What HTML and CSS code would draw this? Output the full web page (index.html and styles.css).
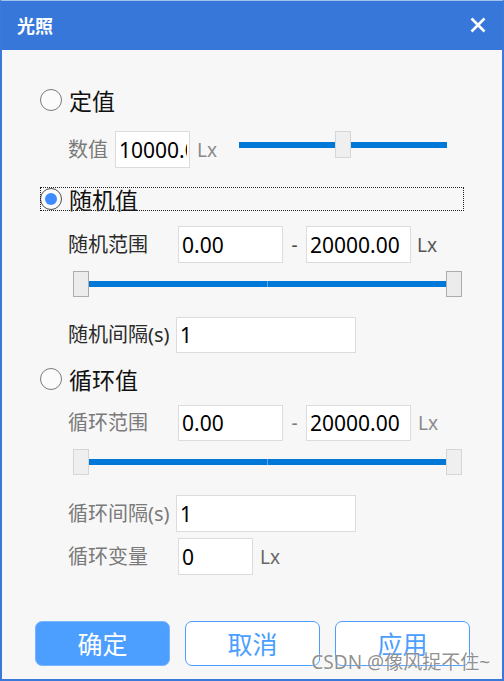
FILE: index.html
```html
<!DOCTYPE html>
<html lang="zh">
<head>
<meta charset="utf-8">
<title>光照</title>
<link rel="stylesheet" href="styles.css">
</head>
<body>
<div class="window">
  <div class="titlebar">
    <span class="title">光照</span>
    <svg class="close" width="16" height="16" viewBox="0 0 16 16"><path d="M1.5 1.5 L14.5 14.5 M14.5 1.5 L1.5 14.5" stroke="#fff" stroke-width="2.6" fill="none"/></svg>
  </div>
  <div class="content">
    <div class="radio-row row-a"><span class="radio"></span><span class="radio-label">定值</span></div>

    <div class="field-row row-b">
      <span class="label muted lw47">数值</span>
      <input class="input w75" type="text" value="10000.00" readonly>
      <span class="unit">Lx</span>
      <div class="slider single">
        <div class="track w96"></div>
        <div class="thumb disabled tall"></div>
        <div class="track w96"></div>
      </div>
    </div>

    <div class="radio-row row-c focused"><span class="radio checked"></span><span class="radio-label">随机值</span></div>

    <div class="field-row row-d">
      <span class="label lw110">随机范围</span>
      <input class="input w105" type="text" value="0.00" readonly>
      <span class="dash">-</span>
      <input class="input w105" type="text" value="20000.00" readonly>
      <span class="unit u-dark">Lx</span>
    </div>

    <div class="range row-e">
      <div class="thumb"></div>
      <div class="track split"></div>
      <div class="thumb"></div>
    </div>

    <div class="field-row row-f">
      <span class="label lw108">随机间隔(s)</span>
      <input class="input w180" type="text" value="1" readonly>
    </div>

    <div class="radio-row row-g"><span class="radio"></span><span class="radio-label">循环值</span></div>

    <div class="field-row row-h">
      <span class="label muted lw110">循环范围</span>
      <input class="input w105" type="text" value="0.00" readonly>
      <span class="dash muted">-</span>
      <input class="input w105" type="text" value="20000.00" readonly>
      <span class="unit">Lx</span>
    </div>

    <div class="range row-i">
      <div class="thumb disabled"></div>
      <div class="track split"></div>
      <div class="thumb disabled"></div>
    </div>

    <div class="field-row row-j">
      <span class="label muted lw108">循环间隔(s)</span>
      <input class="input w180" type="text" value="1" readonly>
    </div>

    <div class="field-row row-k">
      <span class="label muted lw110">循环变量</span>
      <input class="input w75" type="text" value="0" readonly>
      <span class="unit u-mid">Lx</span>
    </div>

    <div class="buttons">
      <button class="btn primary">确定</button>
      <button class="btn">取消</button>
      <button class="btn">应用</button>
    </div>
  </div>
  <div class="watermark">CSDN @像风捉不住~</div>
</div>
</body>
</html>
```

FILE: styles.css
```css
html, body {
  margin: 0;
  padding: 0;
  background: #ffffff;
}

.window {
  position: relative;
  width: 504px;
  height: 681px;
  box-sizing: border-box;
  border: 2px solid #3a79d9;
  border-top: 1px solid #a3c1ef;
  background: #f7f7f7;
  font-family: "Noto Sans", "Noto Sans CJK SC", sans-serif;
  overflow: hidden;
}

.titlebar {
  height: 49px;
  background: #3677d9;
  display: flex;
  align-items: center;
  justify-content: space-between;
  padding: 0 16px 0 15px;
}

.title {
  color: #ffffff;
  font-family: "Noto Sans CJK SC", sans-serif;
  font-weight: 700;
  font-size: 18px;
  line-height: 20px;
  margin-top: -1px;
}

.close {
  display: block;
  margin-top: -2px;
}

.content {
  padding-top: 38px;
}

/* radio rows */
.radio-row {
  display: flex;
  align-items: center;
  width: 424px;
  height: 24px;
  margin-left: 38px;
  box-sizing: border-box;
}

.radio-row.focused {
  outline: 1px dotted #222;
  outline-offset: -1px;
}

.radio {
  width: 22px;
  height: 22px;
  box-sizing: border-box;
  border: 1.5px solid #7a7a7a;
  border-radius: 50%;
  display: flex;
  align-items: center;
  justify-content: center;
  flex: none;
  background: #fbfbfb;
}

.radio.checked {
  border-color: #505050;
}

.radio.checked::after {
  content: "";
  width: 12px;
  height: 12px;
  border-radius: 50%;
  background: #3f8cff;
}

.radio-label {
  margin-left: 7px;
  font-family: "Noto Sans CJK SC", sans-serif;
  font-size: 23px;
  line-height: 24px;
  color: #111;
}

/* field rows */
.field-row {
  display: flex;
  align-items: center;
  height: 37px;
  margin-left: 66px;
}

.label {
  font-family: "Noto Sans", "Noto Sans CJK SC", sans-serif;
  font-size: 20px;
  line-height: 24px;
  color: #2a2a2a;
  white-space: nowrap;
  flex: none;
}

.label.muted, .dash.muted {
  color: #7a7a7a;
}

.lw47 { width: 47px; }
.lw108 { width: 108px; }
.lw110 { width: 110px; }

.input {
  height: 37px;
  box-sizing: border-box;
  border: 1px solid #dcdcdc;
  background: #ffffff;
  padding: 0 2px 0 3px;
  margin: 0;
  font-family: "Noto Sans", sans-serif;
  font-size: 21px;
  color: #000;
  outline: none;
  flex: none;
}

.w75 { width: 75px; }
.w105 { width: 105px; }
.w180 { width: 180px; }

.row-f .input, .row-h .input { height: 36px; }

.unit {
  font-family: "Noto Sans", sans-serif;
  font-size: 19px;
  color: #8a8a8a;
  margin-left: 7px;
  line-height: 24px;
}

.unit.u-dark { color: #555; margin-left: 6px; }
.unit.u-mid { color: #666; }

.dash {
  width: 23px;
  text-align: center;
  font-size: 19px;
  color: #444;
  line-height: 24px;
}

/* sliders */
.slider.single {
  display: flex;
  align-items: center;
  align-self: flex-start;
  height: 27px;
  margin-left: 22px;
}

.track {
  height: 6px;
  background: #0078d7;
}

.w96 { width: 96px; }

.track.split {
  flex: 1;
  background: linear-gradient(to right, #0078d7 0, #0078d7 calc(50% - 0.5px), #5aa6e8 calc(50% - 0.5px), #5aa6e8 calc(50% + 0.5px), #0078d7 calc(50% + 0.5px));
}

.thumb {
  width: 16px;
  height: 26px;
  box-sizing: border-box;
  background: #ececec;
  border: 1.5px solid #acacac;
  flex: none;
}

.thumb.tall { height: 27px; }

.thumb.disabled {
  border: 1px solid #d6d6d6;
  background: #efefef;
}

.range {
  display: flex;
  align-items: center;
  width: 389px;
  height: 26px;
  margin-left: 71px;
}

/* vertical rhythm */
.row-b { margin-top: 19px; }
.row-c { margin-top: 19px; }
.row-d { margin-top: 15px; }
.row-e { margin-top: 8px; }
.row-f { margin-top: 20px; height: 36px; }
.row-g { margin-top: 14px; }
.row-h { margin-top: 14px; height: 36px; }
.row-i { margin-top: 8px; }
.row-j { margin-top: 20px; }
.row-k { margin-top: 6px; }

/* buttons */
.buttons {
  display: flex;
  gap: 15px;
  margin-top: 46px;
  margin-left: 33px;
}

.btn {
  width: 135px;
  height: 45px;
  box-sizing: border-box;
  border-radius: 7px;
  border: 1.5px solid #4a9eff;
  background: #ffffff;
  color: #4a9eff;
  font-family: "Noto Sans CJK SC", sans-serif;
  font-size: 25px;
  line-height: 1;
  padding: 0;
}

.btn.primary {
  background: #4d9fff;
  border: 1px solid #7ab5ff;
  color: #ffffff;
}

.watermark {
  position: absolute;
  right: 12px;
  bottom: 5px;
  font-family: "Noto Sans", "Noto Sans CJK SC", sans-serif;
  font-size: 19px;
  line-height: 24px;
  color: rgba(125, 125, 125, 0.85);
  text-shadow: 0 0 2px rgba(255,255,255,0.9);
  white-space: nowrap;
}
```
